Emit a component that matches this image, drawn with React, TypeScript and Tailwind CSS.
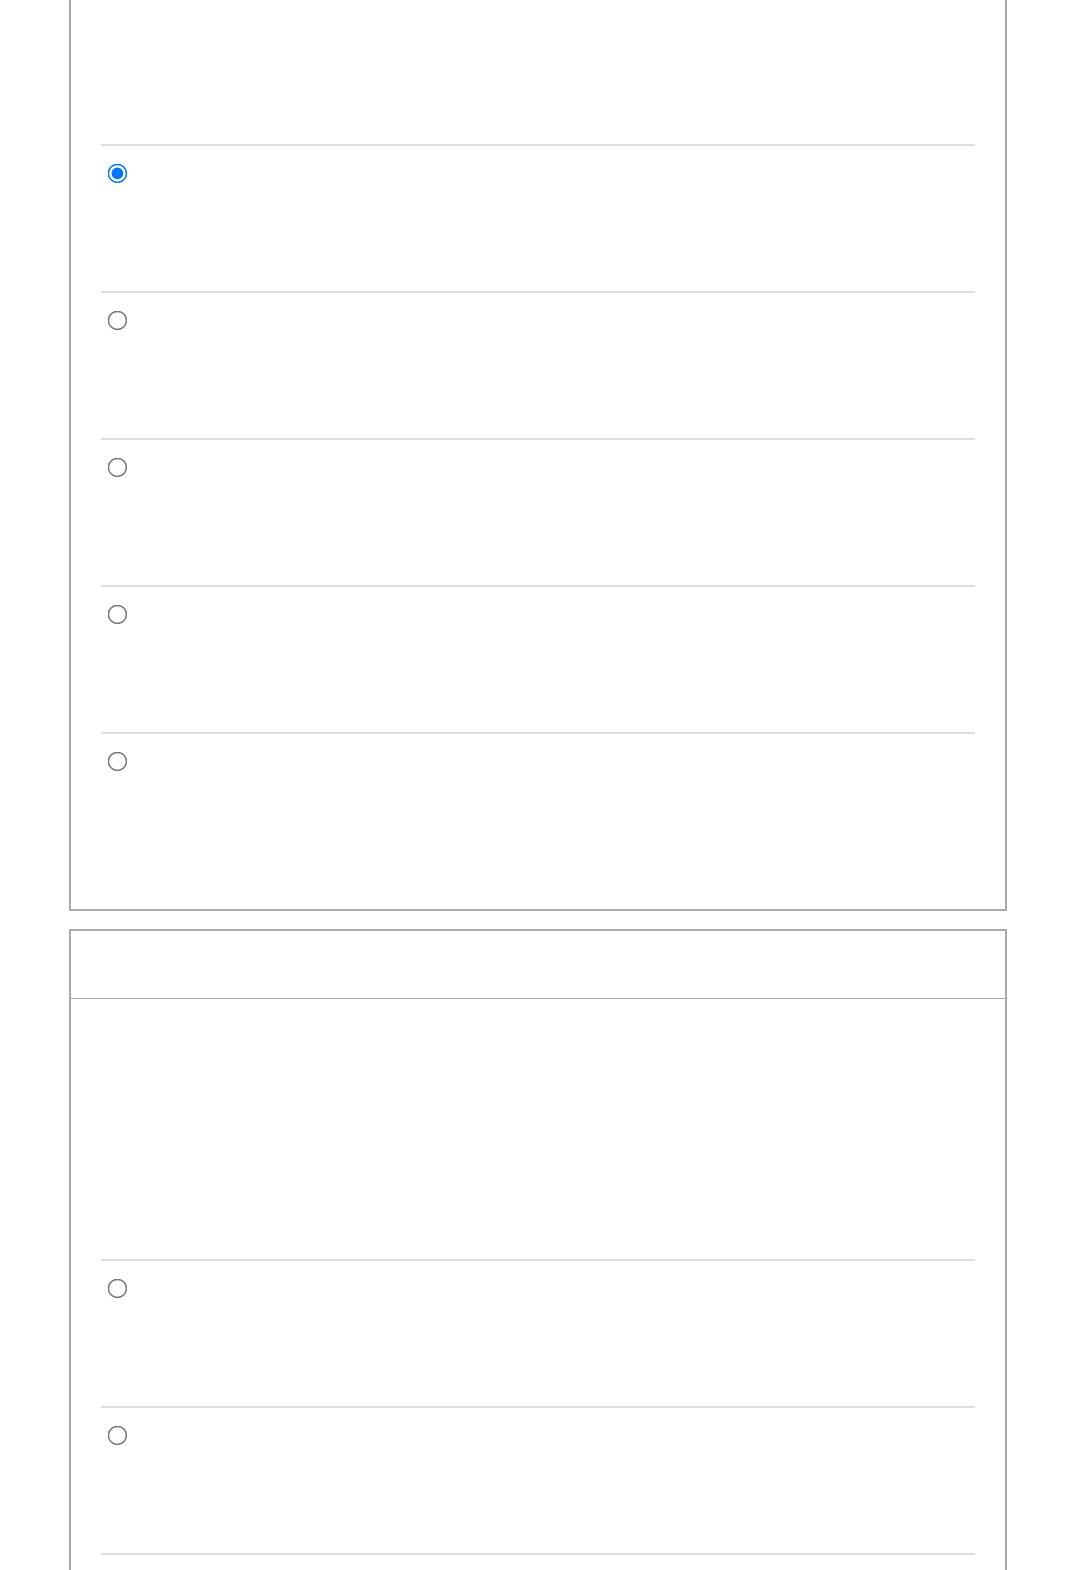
import React from "react";

function Row({ checked }: { checked?: boolean }) {
  return (
    <div className="h-[147px] border-t-2 border-[#dddddd] pt-[18px] pl-[7px]">
      <div className="w-5 h-5 flex items-center justify-center">
        <input
          type="radio"
          name="opt"
          defaultChecked={checked}
          className="block w-[13.333px] h-[13.333px] m-0 scale-150"
        />
      </div>
    </div>
  );
}

export default function App() {
  return (
    <div className="bg-white min-h-[1570px] w-full overflow-hidden" style={{ fontFamily: '"Liberation Sans", Arial, sans-serif' }}>
      <div className="ml-[69px] w-[938px] border-2 border-t-0 border-[#aaaaaa] px-[30px] pb-[30px]">
        <div className="h-[144px]" />
        <Row checked />
        <Row />
        <Row />
        <Row />
        <Row />
      </div>
      <div className="ml-[69px] mt-[18px] w-[938px] border-2 border-b-0 border-[#aaaaaa]">
        <div className="h-[68px] border-b border-[#aaaaaa]" />
        <div className="px-[30px]">
          <div className="h-[260px]" />
          <Row />
          <Row />
          <Row />
        </div>
      </div>
    </div>
  );
}
